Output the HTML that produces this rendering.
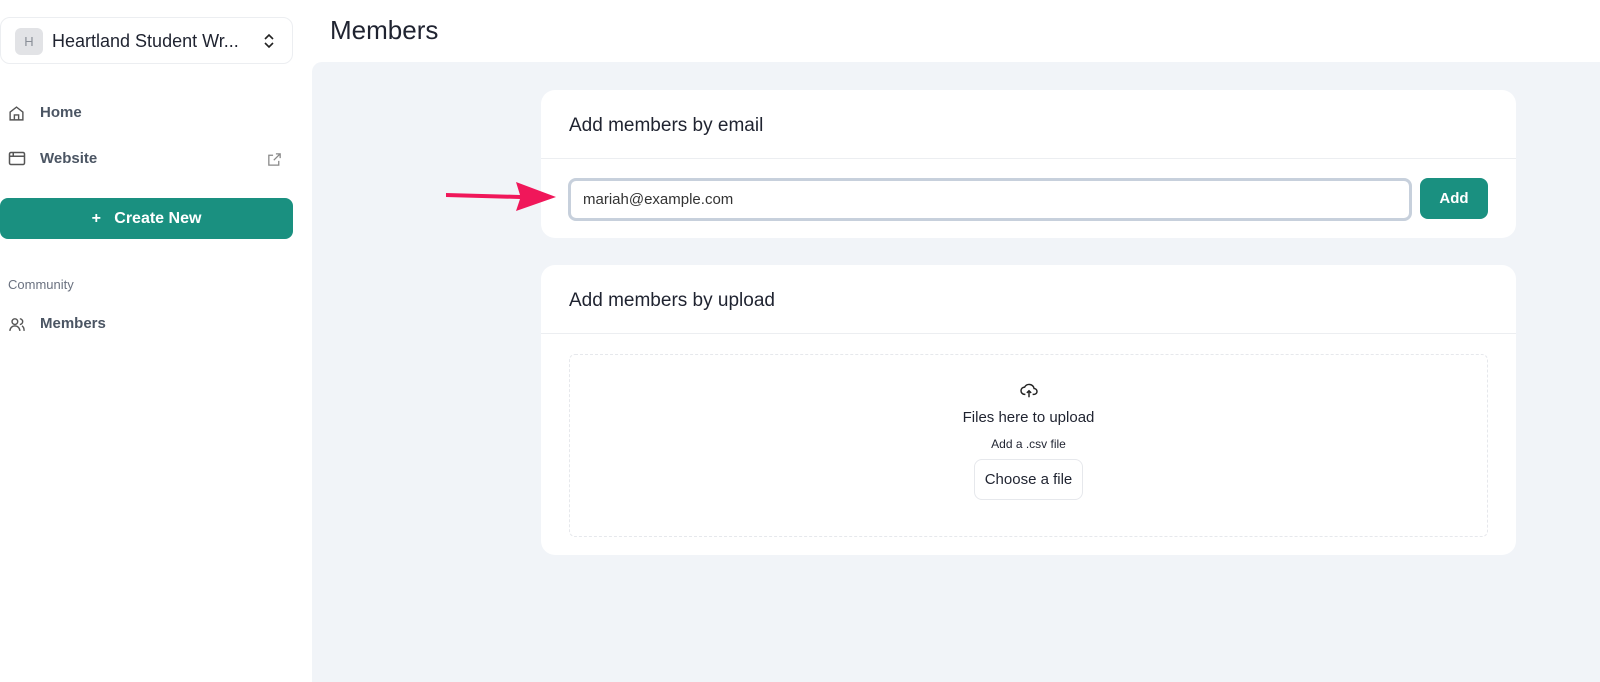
<!DOCTYPE html>
<html><head><meta charset="utf-8"><style>
*{box-sizing:border-box;margin:0;padding:0}
body{width:1600px;height:674px;background:#fff;font-family:"Liberation Sans",sans-serif;position:relative;overflow:hidden;color:#1f2937}
.sw{position:absolute;left:0;top:17px;width:293px;height:47px;border:1px solid #eceef1;border-radius:10px;}
.av{position:absolute;left:14px;top:10px;width:28px;height:27px;background:#e2e3e6;border-radius:6px;color:#8a8f98;font-size:13px;text-align:center;line-height:27px}
.sw .t{position:absolute;left:51px;top:13px;font-size:18px;color:#1f2330}
.nav{position:absolute;left:40px;font-size:15px;color:#4b5563;font-weight:bold}
.ico{position:absolute;left:8px}
.cn{position:absolute;left:0;top:198px;width:293px;height:41px;background:#1a9080;border-radius:8px;color:#fff;font-weight:bold;font-size:16px;text-align:center;line-height:41px}
.main{position:absolute;left:312px;top:62px;width:1300px;height:620px;background:#f1f4f8;border-top-left-radius:10px}
.card{position:absolute;left:541px;width:975px;background:#fff;border-radius:14px}
.card h2{font-size:19px;font-weight:normal;color:#1f2330;padding:25px 28px 0;height:69px;border-bottom:1px solid #eceef1}
.inp{position:absolute;left:27px;top:88px;width:844px;height:43px;border:3px solid #c7d0dc;border-radius:8px;font-size:15px;padding:10px 0 0 12px;color:#333}
.add{position:absolute;left:879px;top:88px;width:68px;height:41px;background:#1a9080;border-radius:8px;color:#fff;font-weight:bold;font-size:15px;text-align:center;line-height:41px}
.drop{position:absolute;left:28px;top:89px;width:919px;height:183px;border:1px dashed #e6e8ec;border-radius:6px;text-align:center}
</style></head><body>
<div class="sw"><div class="av">H</div><div class="t">Heartland Student Wr...</div>
<svg style="position:absolute;left:262px;top:15px" width="12" height="16" viewBox="0 0 12 16" fill="none" stroke="#222" stroke-width="1.6"><path d="M2 6l4-4 4 4M2 10l4 4 4-4"/></svg></div>
<svg class="ico" style="top:105px" width="17" height="17" viewBox="0 0 24 24" fill="none" stroke="#555" stroke-width="2"><path d="M3 10l9-7 9 7v11H3z M9 21v-7h6v7"/></svg>
<div class="nav" style="top:104px">Home</div>
<svg class="ico" style="top:151px" width="18" height="15" viewBox="0 0 24 20" fill="none" stroke="#555" stroke-width="2"><rect x="2" y="2" width="20" height="16" rx="2"/><path d="M2 7h20M7 2v5"/></svg>
<div class="nav" style="top:150px">Website</div>
<svg style="position:absolute;left:266px;top:151px" width="17" height="17" viewBox="0 0 24 24" fill="none" stroke="#888" stroke-width="1.8"><path d="M18 14v6H4V6h6M14 4h6v6M20 4L11 13"/></svg>
<div class="cn">+&nbsp;&nbsp;&nbsp;Create New</div>
<div style="position:absolute;left:8px;top:277px;font-size:13px;color:#6b7280">Community</div>
<svg class="ico" style="top:316px" width="18" height="17" viewBox="0 0 24 24" fill="none" stroke="#555" stroke-width="2"><circle cx="9" cy="8" r="4"/><path d="M2 21c0-4 3-7 7-7s7 3 7 7M16 4a4 4 0 010 8M19 14c2 1 3 4 3 7"/></svg>
<div class="nav" style="top:315px">Members</div>
<div style="position:absolute;left:330px;top:15px;font-size:26px;color:#1f2330">Members</div>
<div class="main"></div>
<div class="card" style="top:90px;height:148px"><h2>Add members by email</h2>
<div class="inp">mariah@example.com</div><div class="add">Add</div></div>
<div class="card" style="top:265px;height:290px"><h2>Add members by upload</h2>
<div class="drop">
<svg style="margin-top:27px" width="18" height="16" viewBox="0 0 24 22" fill="none" stroke="#222" stroke-width="2"><path d="M7 17H6a5 5 0 010-10 7 7 0 0113 2 4 4 0 010 8h-2M12 21v-9M9 15l3-3 3 3"/></svg>
<div style="font-size:15px;margin-top:6px;color:#1f2330">Files here to upload</div>
<div style="font-size:12px;margin-top:11px;color:#1f2330">Add a .csv file</div>
<div style="display:inline-block;margin-top:8px;border:1px solid #e6e8ec;border-radius:8px;padding:11px 10px;font-size:15px;color:#1f2330">Choose a file</div>
</div></div>
<svg style="position:absolute;left:444px;top:178px" width="114" height="36" viewBox="0 0 114 36"><path d="M2 15L76 17L72 4L112 19L72 33L76 21L2 19Z" fill="#f0175a"/></svg>
</body></html>
